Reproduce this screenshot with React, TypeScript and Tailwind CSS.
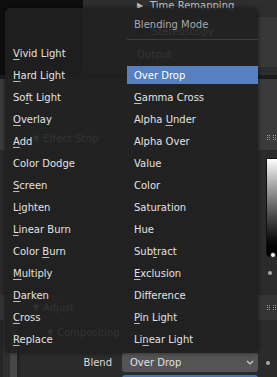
import React from "react";

type Item = [string, number];

const leftItems: Item[] = [
  ["Vivid Light", 0],
  ["Hard Light", 0],
  ["Soft Light", 2],
  ["Overlay", 0],
  ["Add", 0],
  ["Color Dodge", -1],
  ["Screen", 0],
  ["Lighten", 1],
  ["Linear Burn", 0],
  ["Color Burn", 6],
  ["Multiply", 0],
  ["Darken", 0],
  ["Cross", 0],
  ["Replace", 0],
];

const rightItems: Item[] = [
  ["Over Drop", -1],
  ["Gamma Cross", 0],
  ["Alpha Under", 6],
  ["Alpha Over", -1],
  ["Value", -1],
  ["Color", -1],
  ["Saturation", -1],
  ["Hue", -1],
  ["Subtract", 3],
  ["Exclusion", 0],
  ["Difference", -1],
  ["Pin Light", 0],
  ["Linear Light", 2],
];

function Label({ text, u }: { text: string; u: number }) {
  if (u < 0) return <span>{text}</span>;
  return (
    <span>
      {text.slice(0, u)}
      <span className="underline decoration-1 underline-offset-[2px] decoration-[#bdbdbd] [text-decoration-skip-ink:none]">
        {text[u]}
      </span>
      {text.slice(u + 1)}
    </span>
  );
}

function Grip() {
  return (
    <svg width="9" height="5" viewBox="0 0 9 5">
      {[0, 2, 4].map((y) =>
        [0, 2, 6, 8].map((x) => (
          <rect key={`${x}-${y}`} x={x} y={y} width="1" height="1" fill="#9a9a9a" />
        ))
      )}
    </svg>
  );
}

function Dot({ size = 4, color = "#a8a8a8" }: { size?: number; color?: string }) {
  return <div className="rounded-full shrink-0" style={{ width: size, height: size, background: color }} />;
}

export default function App() {
  return (
    <div className="relative w-[277px] h-[377px] overflow-hidden bg-[#2b2b2b] text-[10px] leading-[10px] text-[#cfcfcf] font-['DejaVu_Sans',sans-serif]">
      {/* Background editor */}
      <div className="flex flex-col h-full">
        <div className="flex h-[75px] shrink-0">
          <div className="w-[83px] bg-[#0e0e0e]" />
          <div className="flex-1 flex flex-col">
            <div className="h-[17px] shrink-0 bg-[#2e2e2e] flex items-start pt-[1px] pl-[54px] text-[#c4c4c4]">
              <span className="w-[13px] text-[8px] leading-[10px]">▶</span>
              <span>Time Remapping</span>
            </div>
            <div className="h-[50px] shrink-0 bg-[#383838] flex flex-col pl-[54px]">
              <div className="mt-[10px] flex items-center h-[10px]">
                <div className="w-[8px] h-[8px] rounded-[2px] bg-[#1c1c1c] mr-[7px]" />
                <span>Stereoscopy</span>
              </div>
              <div className="mt-[13px] h-[10px]">Output</div>
            </div>
            <div className="h-[8px] shrink-0 bg-[#2d2d2d]" />
          </div>
        </div>
        <div className="h-[4px] shrink-0 bg-[#1c1c1c]" />
        <div className="h-[71px] shrink-0 bg-[#3b3b3b] flex items-end">
          <div className="flex-1 h-[22px] flex items-center pl-[33px]">
            <span className="w-[10px] text-[8px]">▼</span>
            <span>Effect Strip</span>
          </div>
          <div className="h-[22px] pr-[1px] flex items-start pt-[7px]">
            <Grip />
          </div>
        </div>
        <div className="h-[145px] shrink-0 flex justify-end">
          <div className="flex flex-col items-center w-[16px] -mr-[4px]">
            <div className="mt-[8px] w-[14px] h-[99px] shrink-0 rounded-bl-[3px] border border-[#111] bg-gradient-to-b from-[#ffffff] to-[#000000] relative">
              <div className="absolute bottom-[-2px] left-[3px] w-[6px] h-[6px] rounded-full bg-white border border-[#222]" />
            </div>
            <div className="mt-[14px] -ml-[6px]">
              <Dot />
            </div>
          </div>
        </div>
        <div className="h-[25px] shrink-0 bg-[#353535] flex items-center">
          <div className="flex-1 flex items-center pl-[33px]">
            <span className="w-[10px] text-[8px]">▼</span>
            <span>Adjust</span>
          </div>
          <div className="pr-[1px]">
            <Grip />
          </div>
        </div>
        <div className="flex-1 min-h-0 overflow-hidden flex">
          <div className="w-[3px] bg-[#262626]" />
          <div className="w-[7px] bg-[#2f2f2f]" />
          <div className="w-[7px] bg-[#474747]" />
          <div className="w-[3px] bg-[#232323]" />
          <div className="flex-1 flex flex-col">
            <div className="mt-[8px] h-[10px] shrink-0 flex items-center pl-[27px]">
              <span className="w-[10px] text-[8px]">▼</span>
              <span>Compositing</span>
            </div>
            <div className="mt-[15px] shrink-0 flex items-center h-[19px]">
              <span className="w-[102px] text-right pr-[10px] text-[#dcdcdc]">Blend</span>
              <div className="w-[136px] h-[19px] rounded-[3px] bg-[#545454] flex items-center pl-[8px] pr-[4px] text-[#e0e0e0]">
                <span className="flex-1">Over Drop</span>
                <svg width="8" height="5" viewBox="0 0 8 5">
                  <path d="M1 1 L4 4 L7 1" stroke="#d0d0d0" strokeWidth="1.2" fill="none" />
                </svg>
              </div>
              <div className="flex-1 flex justify-center">
                <Dot />
              </div>
            </div>
            <div className="mt-[3px] ml-[102px] w-[136px] h-[4px] shrink-0 rounded-t-[3px] bg-[#4772b3]" />
          </div>
        </div>
      </div>

      {/* Popup menu */}
      <div className="absolute left-[5px] top-[8px] w-[253px] h-[345px] rounded-[5px] bg-[rgba(32,32,32,0.9)] shadow-[0_0_4px_rgba(0,0,0,0.55)] flex text-[#e2e2e2]">
        <div className="w-[122px] pt-[36px] flex flex-col gap-[4px]">
          {leftItems.map(([t, u]) => (
            <div key={t} className="h-[18px] pt-[1px] leading-[17px] pl-[8px] whitespace-nowrap">
              <Label text={t} u={u} />
            </div>
          ))}
        </div>
        <div className="flex-1 pt-[7px] flex flex-col">
          <div className="h-[18px] pt-[1px] leading-[17px] pl-[7px] text-[#a9a9a9]">Blending Mode</div>
          <div className="mt-[6px] h-px bg-[#3d3d3d]" />
          <div className="mt-[26px] flex flex-col gap-[4px]">
            {rightItems.map(([t, u], i) => (
              <div
                key={t}
                className={
                  i === 0
                    ? "h-[18px] pt-[1px] leading-[17px] pl-[7px] whitespace-nowrap bg-[#5680c2] text-white"
                    : "h-[18px] pt-[1px] leading-[17px] pl-[7px] whitespace-nowrap"
                }
              >
                <Label text={t} u={u} />
              </div>
            ))}
          </div>
        </div>
      </div>
    </div>
  );
}
